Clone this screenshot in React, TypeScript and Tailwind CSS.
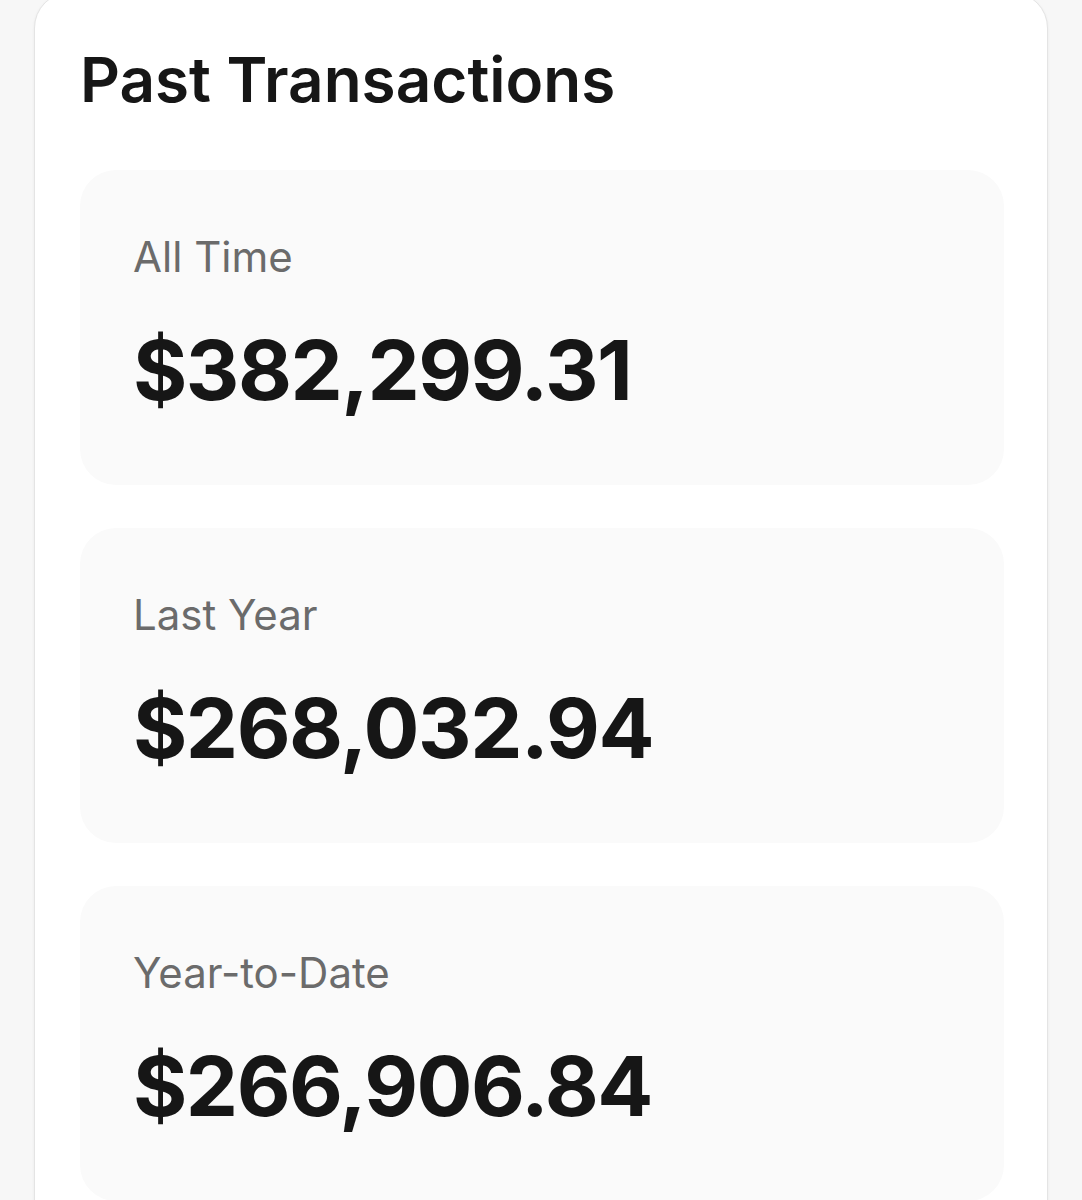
import React from "react";

const items = [
  { label: "All Time", amount: "$382,299.31" },
  { label: "Last Year", amount: "$268,032.94" },
  { label: "Year-to-Date", amount: "$266,906.84" },
];

export default function App() {
  return (
    <div
      className="h-[1200px] w-full overflow-hidden bg-[#f7f7f7]"
      style={{ fontFamily: "Inter, 'Noto Sans', sans-serif" }}
    >
      <div className="mx-[34px] mt-[-8px] rounded-[36px] border border-[#e4e4e4] bg-white pl-[45px] pr-[43px] pt-[51px] pb-[40px] shadow-[0_1px_3px_rgba(0,0,0,0.06)]">
        <h1 className="text-[62px] font-semibold leading-[72px] text-[#161616]">
          Past Transactions
        </h1>
        <div className="mt-[54px] flex flex-col gap-[43px]">
          {items.map((it) => (
            <div
              key={it.label}
              className="h-[315px] rounded-[36px] bg-[#fafafa] pl-[53px] pt-[62px]"
            >
              <div className="text-[42px] leading-[50px] text-[#6b6b6b]">
                {it.label}
              </div>
              <div className="mt-[40px] text-[83px] font-bold leading-[96px] tracking-[-1.5px] text-[#161616]">
                {it.amount}
              </div>
            </div>
          ))}
        </div>
      </div>
    </div>
  );
}
